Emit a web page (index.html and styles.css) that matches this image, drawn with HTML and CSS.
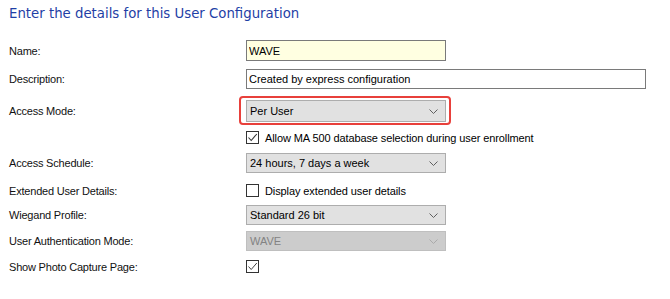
FILE: index.html
```html
<!DOCTYPE html>
<html lang="en">
<head>
    <meta charset="UTF-8">
    <title>User Configuration</title>
    <link rel="stylesheet" href="styles.css">
</head>
<body>
    <h1 class="title">Enter the details for this User Configuration</h1>
    <div class="form">
        <div class="row row-name">
            <label class="lbl">Name:</label>
            <input class="txt txt-name" type="text" value="WAVE">
        </div>
        <div class="row row-desc">
            <label class="lbl">Description:</label>
            <input class="txt txt-desc" type="text" value="Created by express configuration">
        </div>
        <div class="row row-access">
            <label class="lbl">Access Mode:</label>
            <div class="highlight">
                <div class="select">
                    <span>Per User</span>
                    <svg class="chev" width="9" height="5" viewBox="0 0 9 5"><polyline points="0.5,0.5 4.5,4.5 8.5,0.5" fill="none" stroke="#606060" stroke-width="1"/></svg>
                </div>
            </div>
        </div>
        <div class="row row-allow">
            <span></span>
            <div class="check-line">
                <span class="box"><svg width="11" height="11" viewBox="0 0 11 11"><polyline points="1.5,5.5 4.2,8.5 9.8,2" fill="none" stroke="#333" stroke-width="1.1"/></svg></span>
                <span class="check-text">Allow MA 500 database selection during user enrollment</span>
            </div>
        </div>
        <div class="row row-schedule">
            <label class="lbl">Access Schedule:</label>
            <div class="select">
                <span>24 hours, 7 days a week</span>
                <svg class="chev" width="9" height="5" viewBox="0 0 9 5"><polyline points="0.5,0.5 4.5,4.5 8.5,0.5" fill="none" stroke="#606060" stroke-width="1"/></svg>
            </div>
        </div>
        <div class="row row-extended">
            <label class="lbl">Extended User Details:</label>
            <div class="check-line">
                <span class="box"></span>
                <span class="check-text">Display extended user details</span>
            </div>
        </div>
        <div class="row row-wiegand">
            <label class="lbl">Wiegand Profile:</label>
            <div class="select">
                <span>Standard 26 bit</span>
                <svg class="chev" width="9" height="5" viewBox="0 0 9 5"><polyline points="0.5,0.5 4.5,4.5 8.5,0.5" fill="none" stroke="#606060" stroke-width="1"/></svg>
            </div>
        </div>
        <div class="row row-auth">
            <label class="lbl">User Authentication Mode:</label>
            <div class="select disabled">
                <span>WAVE</span>
                <svg class="chev" width="9" height="5" viewBox="0 0 9 5"><polyline points="0.5,0.5 4.5,4.5 8.5,0.5" fill="none" stroke="#aaa" stroke-width="1"/></svg>
            </div>
        </div>
        <div class="row row-photo">
            <label class="lbl">Show Photo Capture Page:</label>
            <div class="check-line">
                <span class="box"><svg width="11" height="11" viewBox="0 0 11 11"><polyline points="1.5,5.5 4.2,8.5 9.8,2" fill="none" stroke="#444" stroke-width="1"/></svg></span>
            </div>
        </div>
    </div>
</body>
</html>
```

FILE: styles.css
```css
body {
    margin: 0;
    padding: 0;
    background-color: #fff;
    font-family: 'Liberation Sans', Arial, sans-serif;
    font-size: 11px;
    color: #000;
}

.title {
    margin: 5px 0 0 9px;
    font-family: 'DejaVu Sans', Verdana, sans-serif;
    font-size: 13.3px;
    line-height: 18px;
    font-weight: normal;
    color: #1f3fa6;
}

.form {
    margin-top: 17px;
    padding-left: 9px;
}

.row {
    display: grid;
    grid-template-columns: 237px 1fr;
    align-items: center;
}

.lbl {
    color: #111;
    letter-spacing: -0.2px;
}

.row-name { height: 21px; }
.row-desc { height: 20px; margin-top: 8px; }
.row-access { height: 29px; margin-top: 7px; }
.row-allow { height: 13px; margin-top: 6px; }
.row-schedule { height: 20px; margin-top: 9px; }
.row-extended { height: 13px; margin-top: 11px; }
.row-wiegand { height: 20px; margin-top: 8px; }
.row-auth { height: 20px; margin-top: 6px; }
.row-photo { height: 13px; margin-top: 9px; }

.txt {
    box-sizing: border-box;
    margin: 0;
    height: 100%;
    padding: 0 2px;
    border: 1px solid #7a7a7a;
    font-family: 'Liberation Sans', Arial, sans-serif;
    font-size: 11px;
    color: #000;
    outline: none;
}

.txt-name {
    width: 200px;
    background-color: #ffffe1;
}

.txt-desc {
    width: 400px;
    background-color: #fff;
}

.highlight {
    box-sizing: border-box;
    width: 212px;
    height: 29px;
    margin-left: -7px;
    padding: 2px 2px 1px 5px;
    border: 2px solid #e8403b;
    border-radius: 4px;
}

.highlight .select {
    height: 22px;
}

.select {
    box-sizing: border-box;
    display: flex;
    align-items: center;
    justify-content: space-between;
    width: 200px;
    height: 20px;
    padding: 0 7px 0 3px;
    background-color: #e1e1e1;
    border: 1px solid #adadad;
    font-size: 11px;
    color: #000;
}

.select.disabled {
    background-color: #cccccc;
    border-color: #bfbfbf;
    color: #838383;
}

.chev {
    display: block;
}

.check-line {
    display: flex;
    align-items: center;
    gap: 6px;
}

.box {
    box-sizing: border-box;
    display: flex;
    align-items: center;
    justify-content: center;
    width: 13px;
    height: 13px;
    border: 1px solid #333;
    background-color: #fff;
}

.box svg {
    display: block;
}

.check-text {
    font-size: 11px;
    letter-spacing: -0.1px;
    color: #000;
}
```
